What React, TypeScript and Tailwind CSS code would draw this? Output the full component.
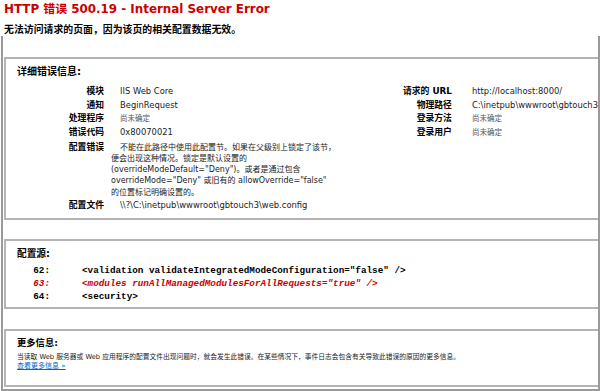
const sans = "font-['DejaVu_Sans','Noto_Sans_CJK_SC',sans-serif]";

function Row({ label, children, gray }: { label: string; children: React.ReactNode; gray?: boolean }) {
  return (
    <>
      <div className="text-right text-[8.8px] font-bold leading-[13.5px] whitespace-nowrap">{label}</div>
      <div className={gray ? "text-[7.5px] leading-[13.5px] text-[#555]" : "text-[8.4px] leading-[13.5px] text-[#222] whitespace-nowrap"}>
        {children}
      </div>
    </>
  );
}

function CodeLine({ n, text, hot }: { n: number; text: string; hot?: boolean }) {
  const cls = hot ? "text-[#cc0000] italic" : "text-black";
  return (
    <>
      <div className={`text-right ${cls}`}>{n}:</div>
      <div className={`whitespace-pre ${cls}`}>{text}</div>
    </>
  );
}

export default function App() {
  return (
    <div className={`w-[600px] h-[391px] overflow-hidden bg-white text-black ${sans}`}>
      <h1 className="pl-1 h-[18px] leading-[18px] text-[11.9px] font-bold text-[#cc0000] whitespace-nowrap">
        HTTP 错误 500.19 - Internal Server Error
      </h1>
      <h2 className="pl-1 mt-[6px] h-[12px] leading-[12px] text-[9.9px] font-bold whitespace-nowrap">
        无法访问请求的页面，因为该页的相关配置数据无效。
      </h2>

      <div className="ml-[1px] w-[599px] border-x-2 border-b-2 border-[#9a9a9a] pt-[21px] pb-[2px] pl-[1px]">
        {/* detail */}
        <div className="border-l-2 border-y-2 border-[#b4b4b4] pt-[6px] pb-[6px] pl-[11px]">
          <h3 className="h-[14px] leading-[14px] text-[10px] font-bold">详细错误信息:</h3>
          <div className="-ml-[11px] mt-[6px] flex">
            <div className="grid grid-cols-[98px_222px] gap-x-[16px] w-[338px]">
              <Row label="模块">IIS Web Core</Row>
              <Row label="通知">BeginRequest</Row>
              <Row label="处理程序" gray>尚未确定</Row>
              <Row label="错误代码">0x80070021</Row>
              <div className="text-right text-[8.8px] font-bold leading-[11.25px] pt-[2.5px] pb-[0.75px]">配置错误</div>
              <div className="-ml-[9px] indent-[9px] text-[8px] leading-[11.25px] pt-[2.5px] pb-[0.75px] text-[#222] whitespace-nowrap">
                不能在此路径中使用此配置节。如果在父级别上锁定了该节，
                <br />
                便会出现这种情况。锁定是默认设置的
                <br />
                (overrideModeDefault="Deny")。或者是通过包含
                <br />
                overrideMode="Deny" 或旧有的 allowOverride="false"
                <br />
                的位置标记明确设置的。
              </div>
              <Row label="配置文件">\\?\C:\inetpub\wwwroot\gbtouch3\web.config</Row>
            </div>
            <div className="grid grid-cols-[108px_1fr] gap-x-[20px] content-start">
              <Row label="请求的 URL">http://localhost:8000/</Row>
              <Row label="物理路径">C:\inetpub\wwwroot\gbtouch3</Row>
              <Row label="登录方法" gray>尚未确定</Row>
              <Row label="登录用户" gray>尚未确定</Row>
            </div>
          </div>
        </div>

        {/* config source */}
        <div className="mt-[19px] border-l-2 border-y-2 border-[#b4b4b4] pt-[6px] pb-[4.5px] pl-[11px]">
          <h3 className="h-[14px] leading-[14px] text-[9.7px] font-bold">配置源:</h3>
          <div className="-ml-[11px] mt-[2.5px] grid grid-cols-[44px_1fr] gap-x-[32px] leading-[13px] text-[9.3px] font-bold font-['Liberation_Mono',monospace]">
            <CodeLine n={62} text={'<validation validateIntegratedModeConfiguration="false" />'} />
            <CodeLine n={63} text={'<modules runAllManagedModulesForAllRequests="true" />'} hot />
            <CodeLine n={64} text={'<security>'} />
          </div>
        </div>

        {/* more info */}
        <div className="mt-[20px] border-l-2 border-y-2 border-[#b4b4b4] pt-[5px] pb-[14px] pl-[11px]">
          <h3 className="h-[14px] leading-[14px] text-[9.3px] font-bold">更多信息:</h3>
          <p className="mt-[3px] text-[6.75px] leading-[9px] text-[#222] whitespace-nowrap">
            当读取 Web 服务器或 Web 应用程序的配置文件出现问题时，就会发生此错误。在某些情况下，事件日志会包含有关导致此错误的原因的更多信息。
          </p>
          <a href="#" className="block w-fit text-[7px] leading-[9px] text-[#0066cc] underline">
            查看更多信息 »
          </a>
        </div>
      </div>
    </div>
  );
}
